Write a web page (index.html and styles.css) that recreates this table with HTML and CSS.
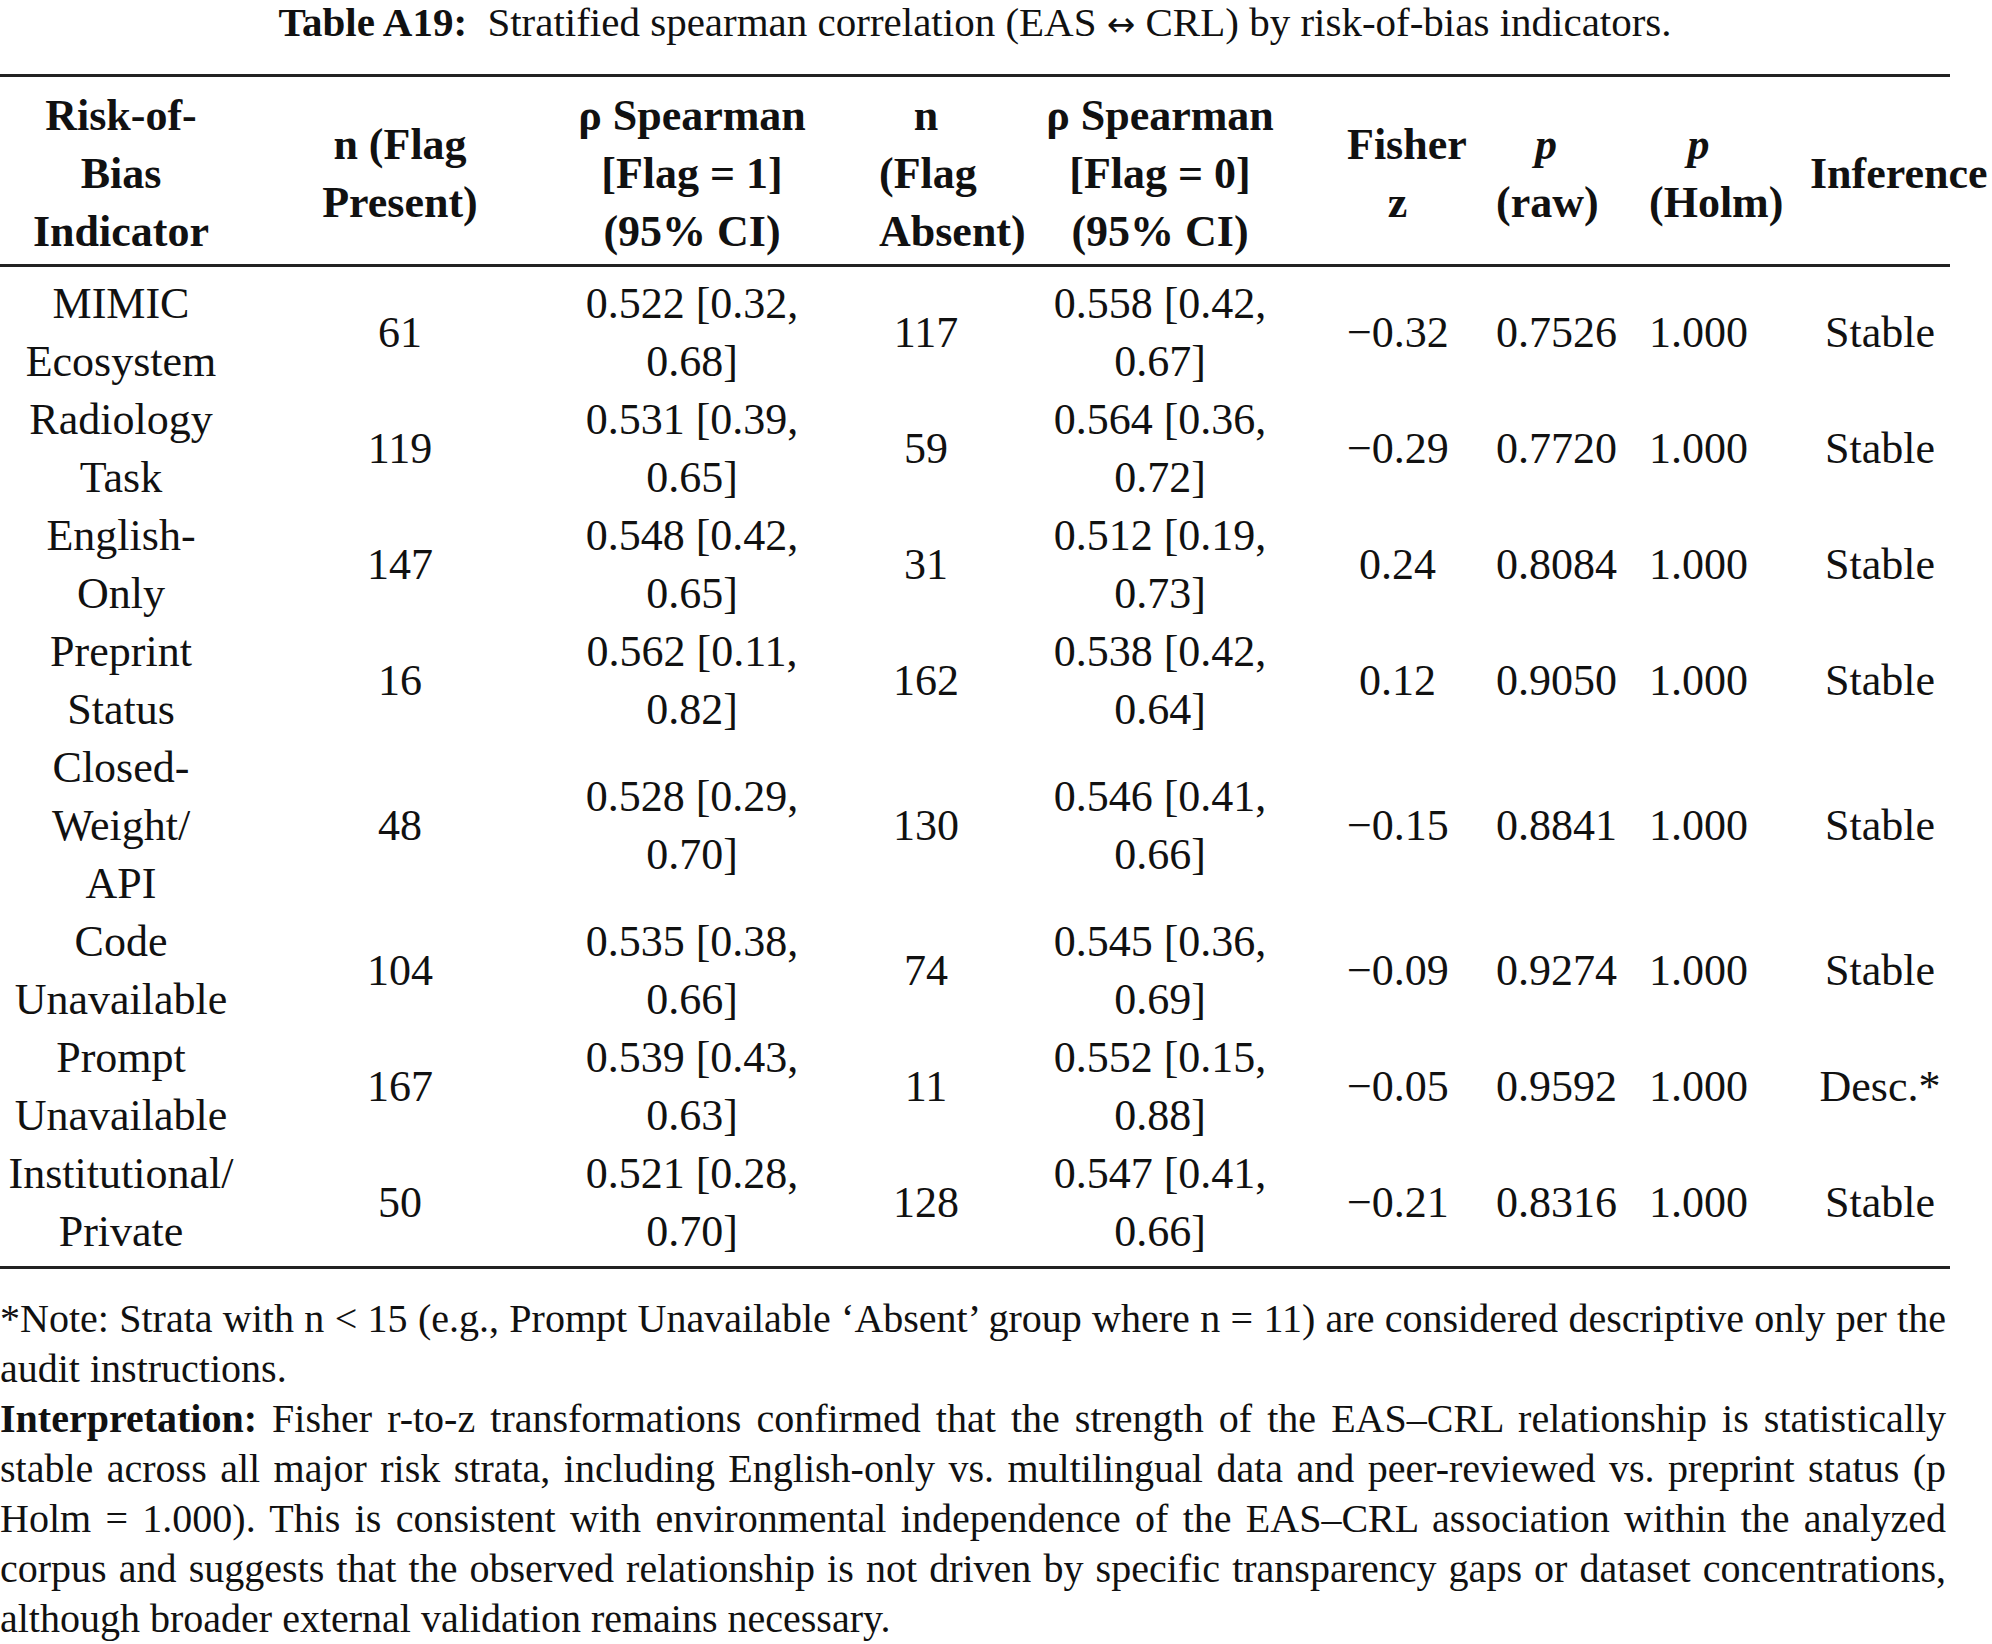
FILE: index.html
```html
<!DOCTYPE html>
<html lang="en">
<head>
<meta charset="utf-8">
<title>Table A19</title>
<link rel="stylesheet" href="styles.css">
</head>
<body>
<div class="page">
  <p class="caption"><b class="label">Table A19:</b> Stratified spearman correlation (EAS <span class="arrow">↔</span> CRL) by risk-of-bias indicators.</p>
  <table class="data">
    <thead>
      <tr>
        <th>Risk-of-<br>Bias<br>Indicator</th>
        <th>n (Flag<br>Present)</th>
        <th>ρ Spearman<br>[Flag = 1]<br>(95% CI)</th>
        <th>n<br>(Flag<br>Absent)</th>
        <th>ρ Spearman<br>[Flag = 0]<br>(95% CI)</th>
        <th>Fisher<br>z</th>
        <th><i>p</i><br>(raw)</th>
        <th><i>p</i><br>(Holm)</th>
        <th>Inference</th>
      </tr>
    </thead>
    <tbody>
      <tr>
        <td>MIMIC<br>Ecosystem</td><td>61</td><td>0.522 [0.32,<br>0.68]</td><td>117</td><td>0.558 [0.42,<br>0.67]</td><td>−0.32</td><td>0.7526</td><td>1.000</td><td>Stable</td>
      </tr>
      <tr>
        <td>Radiology<br>Task</td><td>119</td><td>0.531 [0.39,<br>0.65]</td><td>59</td><td>0.564 [0.36,<br>0.72]</td><td>−0.29</td><td>0.7720</td><td>1.000</td><td>Stable</td>
      </tr>
      <tr>
        <td>English-<br>Only</td><td>147</td><td>0.548 [0.42,<br>0.65]</td><td>31</td><td>0.512 [0.19,<br>0.73]</td><td>0.24</td><td>0.8084</td><td>1.000</td><td>Stable</td>
      </tr>
      <tr>
        <td>Preprint<br>Status</td><td>16</td><td>0.562 [0.11,<br>0.82]</td><td>162</td><td>0.538 [0.42,<br>0.64]</td><td>0.12</td><td>0.9050</td><td>1.000</td><td>Stable</td>
      </tr>
      <tr>
        <td>Closed-<br>Weight/<br>API</td><td>48</td><td>0.528 [0.29,<br>0.70]</td><td>130</td><td>0.546 [0.41,<br>0.66]</td><td>−0.15</td><td>0.8841</td><td>1.000</td><td>Stable</td>
      </tr>
      <tr>
        <td>Code<br>Unavailable</td><td>104</td><td>0.535 [0.38,<br>0.66]</td><td>74</td><td>0.545 [0.36,<br>0.69]</td><td>−0.09</td><td>0.9274</td><td>1.000</td><td>Stable</td>
      </tr>
      <tr>
        <td>Prompt<br>Unavailable</td><td>167</td><td>0.539 [0.43,<br>0.63]</td><td>11</td><td>0.552 [0.15,<br>0.88]</td><td>−0.05</td><td>0.9592</td><td>1.000</td><td>Desc.*</td>
      </tr>
      <tr>
        <td>Institutional/<br>Private</td><td>50</td><td>0.521 [0.28,<br>0.70]</td><td>128</td><td>0.547 [0.41,<br>0.66]</td><td>−0.21</td><td>0.8316</td><td>1.000</td><td>Stable</td>
      </tr>
    </tbody>
  </table>
  <div class="notes">
    <p class="para"><span class="ln">*Note: Strata with n &lt; 15 (e.g., Prompt Unavailable ‘Absent’ group where n = 11) are considered descriptive only per the</span><span class="ln end">audit instructions.</span></p>
    <p class="para"><span class="ln"><b>Interpretation:</b> Fisher r-to-z transformations confirmed that the strength of the EAS–CRL relationship is statistically</span><span class="ln">stable across all major risk strata, including English-only vs. multilingual data and peer-reviewed vs. preprint status (p</span><span class="ln">Holm = 1.000). This is consistent with environmental independence of the EAS–CRL association within the analyzed</span><span class="ln">corpus and suggests that the observed relationship is not driven by specific transparency gaps or dataset concentrations,</span><span class="ln end">although broader external validation remains necessary.</span></p>
  </div>
</div>
</body>
</html>
```

FILE: styles.css
```css
html, body {
  margin: 0;
  padding: 0;
  background: #ffffff;
}

body {
  color: #111111;
  font-family: "Liberation Serif", "Times New Roman", serif;
}

.page {
  width: 1950px;
}

.caption {
  margin: 0 0 30px;
  height: 44px;
  font-size: 41px;
  line-height: 44px;
  text-align: center;
}

.caption .label {
  font-weight: 700;
  margin-right: 10px;
}

.caption .arrow {
  font-family: "DejaVu Sans", sans-serif;
  font-size: 34px;
  line-height: 0;
}

.data {
  width: 1950px;
  table-layout: fixed;
  border-collapse: separate;
  border-spacing: 0;
  font-size: 44px;
  line-height: 58px;
}

.data th,
.data td {
  box-sizing: border-box;
  padding: 0;
  text-align: center;
  vertical-align: middle;
  font-weight: 400;
}

.data thead th {
  font-weight: 700;
  border-top: 3px solid #222222;
  border-bottom: 3px solid #222222;
  padding-top: 10px;
  padding-bottom: 3px;
}

.data tbody tr:first-child td {
  padding-top: 8px;
}

.data tbody tr:last-child td {
  padding-bottom: 5px;
  border-bottom: 3px solid #222222;
}

/* column widths (border-box) */
.data th:nth-child(1) { width: 270px; }
.data th:nth-child(2) { width: 261px; }
.data th:nth-child(3) { width: 319px; }
.data th:nth-child(4) { width: 151px; }
.data th:nth-child(5) { width: 317px; }
.data th:nth-child(6) { width: 154px; }
.data th:nth-child(7) { width: 150px; }
.data th:nth-child(8) { width: 157px; }
.data th:nth-child(9) { width: 171px; }

/* column gutters */
.data th:nth-child(1), .data td:nth-child(1) { padding-left: 2px;  padding-right: 30px; }
.data th:nth-child(2), .data td:nth-child(2) { padding-left: 30px; padding-right: 31px; }
.data th:nth-child(3), .data td:nth-child(3) { padding-left: 31px; padding-right: 28px; }
.data th:nth-child(4), .data td:nth-child(4) { padding-left: 29px; padding-right: 28px; }
.data th:nth-child(5), .data td:nth-child(5) { padding-left: 29px; padding-right: 28px; }
.data th:nth-child(6), .data td:nth-child(6) { padding-left: 29px; padding-right: 24px; }
.data th:nth-child(7), .data td:nth-child(7) { padding-left: 24px; padding-right: 26px; }
.data th:nth-child(8), .data td:nth-child(8) { padding-left: 27px; padding-right: 31px; }
.data th:nth-child(9), .data td:nth-child(9) { padding-left: 31px; padding-right: 0; }

.notes {
  margin-top: 25px;
  padding-right: 4px;
  font-size: 40px;
  line-height: 50px;
}

.para {
  margin: 0;
}

.ln {
  display: block;
  white-space: nowrap;
  text-align: justify;
  text-align-last: justify;
}

.ln.end {
  text-align-last: left;
}
```
